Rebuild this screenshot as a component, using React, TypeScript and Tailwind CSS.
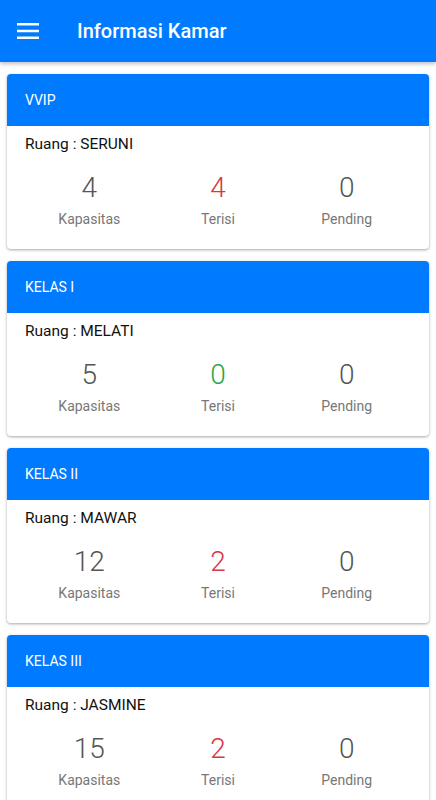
import React from 'react';

type Room = {
  kelas: string;
  ruang: string;
  kapasitas: number;
  terisi: number;
  pending: number;
};

const rooms: Room[] = [
  { kelas: 'VVIP', ruang: 'SERUNI', kapasitas: 4, terisi: 4, pending: 0 },
  { kelas: 'KELAS I', ruang: 'MELATI', kapasitas: 5, terisi: 0, pending: 0 },
  { kelas: 'KELAS II', ruang: 'MAWAR', kapasitas: 12, terisi: 2, pending: 0 },
  { kelas: 'KELAS III', ruang: 'JASMINE', kapasitas: 15, terisi: 2, pending: 0 },
];

function RoomCard({ room }: { room: Room }) {
  return (
    <div className="bg-white rounded-[4px] overflow-hidden shadow-[0_1px_3px_rgba(0,0,0,0.35)]">
      <div className="bg-[#007bff] h-[52px] flex items-center px-[18px] text-white text-[14px]">
        {room.kelas}
      </div>
      <div className="px-[18px] pt-[8px] pb-[20px]">
        <div className="text-[15.5px] leading-[20px] text-[#111]">Ruang : {room.ruang}</div>
        <div className="grid grid-cols-3 mt-[18px] text-center">
          <div>
            <div className="text-[28px] font-light leading-[32px] text-[#555]">{room.kapasitas}</div>
            <div className="text-[14px] leading-[20px] mt-[5px] text-[#777]">Kapasitas</div>
          </div>
          <div>
            <div
              className={
                room.terisi > 0
                  ? 'text-[28px] font-light leading-[32px] text-[#dc3545]'
                  : 'text-[28px] font-light leading-[32px] text-[#28a745]'
              }
            >
              {room.terisi}
            </div>
            <div className="text-[14px] leading-[20px] mt-[5px] text-[#777]">Terisi</div>
          </div>
          <div>
            <div className="text-[28px] font-light leading-[32px] text-[#555]">{room.pending}</div>
            <div className="text-[14px] leading-[20px] mt-[5px] text-[#777]">Pending</div>
          </div>
        </div>
      </div>
    </div>
  );
}

export default function App() {
  return (
    <div className="w-[436px] h-[800px] overflow-hidden bg-white font-['Roboto',sans-serif]">
      <div className="h-[62px] bg-[#007bff] flex items-center shadow-[0_2px_4px_rgba(0,0,0,0.25)] relative z-10">
        <svg className="ml-[17px]" width="22" height="16" viewBox="0 0 22 16" fill="#fff">
          <rect x="0" y="0" width="22" height="2.5" />
          <rect x="0" y="6.75" width="22" height="2.5" />
          <rect x="0" y="13.5" width="22" height="2.5" />
        </svg>
        <span className="ml-[38px] text-white text-[20px] font-medium">Informasi Kamar</span>
      </div>
      <div className="flex flex-col gap-[12px] px-[7px] pt-[12px] pb-[12px]">
        {rooms.map((r) => (
          <RoomCard key={r.kelas} room={r} />
        ))}
      </div>
    </div>
  );
}
